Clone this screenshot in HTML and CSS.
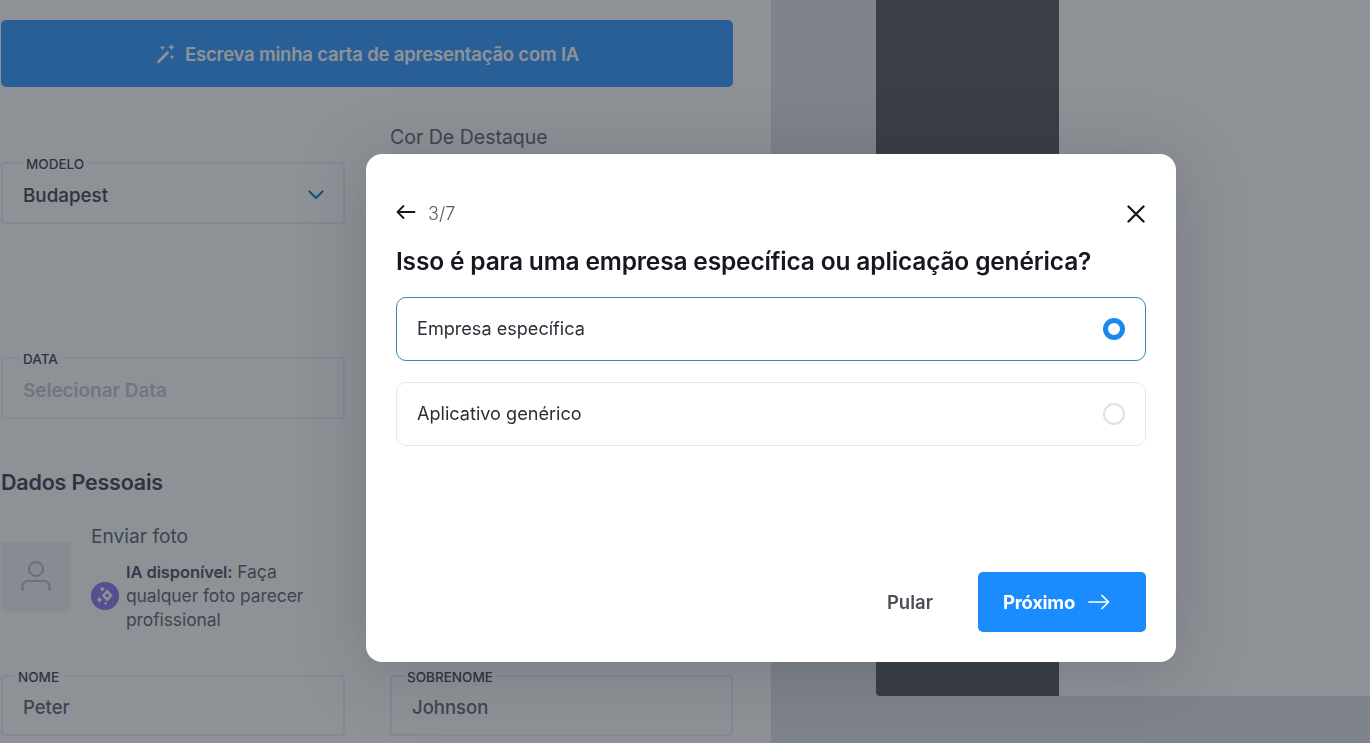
FILE: index.html
```html
<!DOCTYPE html>
<html lang="pt">
<head>
<meta charset="utf-8">
<title>Carta de apresentação</title>
<link rel="stylesheet" href="styles.css">
</head>
<body>
<div class="page">
  <main class="editor">
    <button class="ai-btn" type="button">
      <svg class="wand" viewBox="0 0 20 20" width="20" height="20" fill="currentColor"><path d="M12.300 7l2 2-9.800 9.800a1.400 1.400 0 0 1-2 0 1.400 1.400 0 0 1 0-2z"/><path d="M7.500 1l.8 2 2 .8-2 .8-.8 2-.8-2-2-.8 2-.8zM16.500 0l1 2.300 2.300 1-2.300 1-1 2.300-1-2.300-2.300-1 2.300-1zM17 10.500l.7 1.800 1.800.7-1.800.7-.7 1.800-.7-1.800-1.800-.7 1.800-.7z"/></svg>
      <span>Escreva minha carta de apresentação com IA</span>
    </button>

    <div class="row-template">
      <fieldset class="field field-offset">
        <legend class="legend-wide">Modelo</legend>
        <div class="field-value">
          <span>Budapest</span>
          <svg class="chev" viewBox="0 0 16 10" width="16" height="10" fill="none" stroke="currentColor" stroke-width="2.200" stroke-linecap="round" stroke-linejoin="round"><path d="M1.500 1.500L8 8l6.500-6.500"/></svg>
        </div>
      </fieldset>
      <div class="accent-label">Cor De Destaque</div>
    </div>

    <fieldset class="field field-date">
      <legend>Data</legend>
      <div class="field-value placeholder">Selecionar Data</div>
    </fieldset>

    <h2 class="section-title">Dados Pessoais</h2>

    <section class="photo-row">
      <div class="avatar">
        <svg viewBox="0 0 30 32" width="30" height="32" fill="none" stroke="currentColor" stroke-width="2.200"><circle cx="15" cy="8" r="7"/><path d="M1.500 30v-5a5 5 0 0 1 5-5h17a5 5 0 0 1 5 5v5"/></svg>
      </div>
      <div class="photo-text">
        <div class="upload">Enviar foto</div>
        <div class="ai-note">
          <span class="ai-badge">
            <svg viewBox="0 0 20 20" width="22" height="22" fill="currentColor"><path d="M12 4l5 5.500-5 5.500-5-5.500zM12 7.600L10 9.500l2 1.900 2-1.900z" fill-rule="evenodd"/><path d="M7.500 1.500l2 2.200-2 2.200-2-2.200zM5 11l2.300 2.500L5 16l-2.300-2.500zM10.500 15.200l1.300 1.500-1.300 1.500-1.300-1.500z"/></svg>
          </span>
          <p><b>IA disponível:</b> Faça qualquer foto parecer profissional</p>
        </div>
      </div>
    </section>

    <div class="row-names">
      <fieldset class="field field-name">
        <legend class="legend-narrow">Nome</legend>
        <div class="field-value muted">Peter</div>
      </fieldset>
      <fieldset class="field field-name">
        <legend class="legend-narrow">Sobrenome</legend>
        <div class="field-value muted">Johnson</div>
      </fieldset>
    </div>
  </main>

  <aside class="preview">
    <div class="sheet">
      <div class="sheet-side"></div>
      <div class="sheet-paper"></div>
    </div>
  </aside>
</div>

<div class="backdrop">
  <div class="modal" role="dialog">
    <div class="modal-top">
      <div class="step">
        <svg class="back" viewBox="0 0 20 16" width="20" height="16" fill="none" stroke="currentColor" stroke-width="1.800" stroke-linecap="round" stroke-linejoin="round"><path d="M18.500 8H1.500M7.500 2l-6 6 6 6"/></svg>
        <span>3/7</span>
      </div>
      <svg class="close" viewBox="0 0 18 18" width="18" height="18" fill="none" stroke="currentColor" stroke-width="2.300" stroke-linecap="round"><path d="M1.500 1.500l15 15M16.500 1.500l-15 15"/></svg>
    </div>
    <h1 class="question">Isso é para uma empresa específica ou aplicação genérica?</h1>
    <div class="options">
      <div class="option selected"><span>Empresa específica</span><i class="radio"></i></div>
      <div class="option"><span>Aplicativo genérico</span><i class="radio"></i></div>
    </div>
    <div class="modal-actions">
      <button class="skip" type="button">Pular</button>
      <button class="next" type="button">
        <span>Próximo</span>
        <svg viewBox="0 0 22 16" width="22" height="16" fill="none" stroke="currentColor" stroke-width="1.700" stroke-linecap="round" stroke-linejoin="round"><path d="M1 8h19.500M14 1.500L20.500 8 14 14.500"/></svg>
      </button>
    </div>
  </div>
</div>
</body>
</html>
```
FILE: styles.css
```css
* { box-sizing: border-box; }
html, body { margin: 0; height: 100%; overflow: hidden; }
body { font-family: "Inter", "Noto Sans", sans-serif; background: #fff; color: #3c4250; }

.page { display: flex; height: 743px; overflow: hidden; }
.editor { width: 771px; flex: none; padding: 20px 38px 0 1px; background: #fff; }
.preview { flex: 1; padding-left: 105px; background: #e0e1e6; }
.sheet { display: flex; height: 696px; }
.sheet-side { width: 183px; background: #56575c; border-radius: 0 0 0 4px; }
.sheet-paper { flex: 1; background: #fff; }

.ai-btn { display: flex; align-items: center; justify-content: center; gap: 10px; width: 732px; height: 67px; border: 0; border-radius: 5px; background: #3299ff; color: #fff; font: 600 18.500px "Inter", sans-serif; letter-spacing: -.2px; }
.wand { flex: none; }

.row-template { display: grid; grid-template-columns: 344px 343px; column-gap: 45px; margin-top: 38px; }
.accent-label { font-size: 19.500px; color: #5d6470; line-height: 24px; }

.field { margin: 0; min-width: 0; height: 69px; padding: 0 20px; border: 2px solid #e8eaf6; border-radius: 4px; }
.field-offset { margin-top: 30px; }
.field legend { padding: 2px 5px 0 3px; margin-left: -3px; font-size: 13.500px; font-weight: 500; line-height: 14px; text-transform: uppercase; color: #3c4250; }
.field .legend-wide { margin-left: 0; }
.field .legend-narrow { padding-top: 3px; margin-left: -8px; }
.field-value { display: flex; align-items: center; justify-content: space-between; height: 48px; font-size: 18.800px; font-weight: 500; color: #3c4250; }
.field-value.placeholder { color: #c2c6d1; font-size: 19px; font-weight: 600; letter-spacing: -.05px; }
.field-value.muted { height: 45px; color: #5d6470; font-size: 18.500px; }
.chev { color: #0f85cc; margin-right: -1px; }

.field-date { width: 344px; margin-top: 126px; }

.section-title { margin: 49px 0 0; font-size: 21.500px; line-height: 28px; font-weight: 600; letter-spacing: -.2px; color: #3c4250; }

.photo-row { display: flex; align-items: flex-start; gap: 20px; margin-top: 24px; height: 128px; }
.avatar { display: flex; align-items: center; justify-content: center; width: 70px; height: 70px; margin-top: 22px; flex: none; border-radius: 4px; background: #f0f1f5; color: #b9bdc8; }
.photo-text { width: 240px; margin-top: 3px; }
.upload { font-size: 19.200px; line-height: 26px; color: #5d6470; }
.ai-note { display: flex; align-items: center; gap: 7px; margin-top: 11px; }
.ai-badge { display: flex; align-items: center; justify-content: center; width: 28px; height: 28px; flex: none; border-radius: 50%; background: #8f76f0; color: #fff; }
.ai-note p { margin: 0; font-size: 17.500px; line-height: 24px; color: #5d6470; letter-spacing: -.1px; }
.ai-note b { font-size: 16.500px; font-weight: 600; color: #4b5160; }

.row-names { display: grid; grid-template-columns: 344px 343px; column-gap: 45px; margin-top: 19px; }

.backdrop { position: fixed; inset: 0; background: rgba(30, 37, 48, .5); }
.modal { position: absolute; left: 366px; top: 154px; width: 810px; height: 508px; padding: 47px 30px 30px; display: flex; flex-direction: column; background: #fff; border-radius: 16px; box-shadow: 0 8px 70px rgba(30, 37, 48, .22); color: #15181f; }
.modal-top { display: flex; align-items: center; justify-content: space-between; height: 24px; }
.step { display: flex; align-items: center; gap: 12px; font-size: 18px; font-weight: 300; color: #555a63; }
.back { color: #15181f; margin-top: -2px; }
.close { color: #15181f; margin: 2px 1px 0 0; }
.question { margin: 18px 0 0; font-size: 24.500px; line-height: 36px; font-weight: 600; letter-spacing: -.165px; color: #15181f; }
.options { display: flex; flex-direction: column; gap: 21px; margin-top: 18px; }
.option { display: flex; align-items: center; justify-content: space-between; height: 64px; padding: 0 20px 2px; border: 1px solid #e6e7ea; border-radius: 10px; font-size: 18.100px; color: #2a2e36; }
.option.selected { border-color: #2f86c6; }
.radio { width: 22px; height: 22px; margin-top: 2px; border: 2px solid #dfe0e3; border-radius: 50%; }
.selected .radio { border: 5px solid #1a88f0; }
.modal-actions { display: flex; align-items: center; justify-content: flex-end; gap: 45px; margin-top: auto; }
.skip { padding: 0; border: 0; background: none; font: 600 18.500px "Inter", sans-serif; color: #4a4e57; }
.next { display: flex; align-items: center; justify-content: center; gap: 13px; width: 168px; height: 60px; padding: 0 11px 0 0; border: 0; border-radius: 5px; background: #1a8cff; color: #fff; font: 700 18.500px "Inter", sans-serif; letter-spacing: -.3px; }
```
